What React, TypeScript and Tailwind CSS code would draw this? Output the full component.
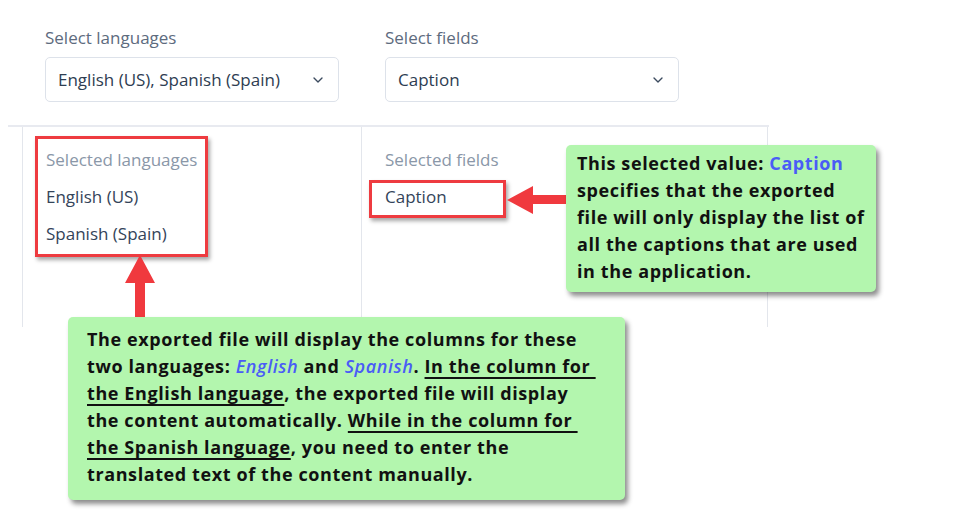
import React from 'react';
import { ChevronDown } from 'lucide-react';

const ui = { fontFamily: '"Open Sans", "Noto Sans", sans-serif' };

function Dropdown({ label, value }: { label: string; value: string }) {
  return (
    <div className="w-[294px]">
      <div className="text-[17px] leading-[20px] text-[#5d6b7e] mb-[9px]">{label}</div>
      <div className="h-[45px] rounded-[5px] border border-[#dde2ea] bg-white flex items-center justify-between pl-[12px] pr-[12px]">
        <span className="text-[17px] text-[#2e3d52]">{value}</span>
        <ChevronDown className="h-4 w-4 text-[#3b4a5e]" strokeWidth={2} />
      </div>
    </div>
  );
}

export default function App() {
  return (
    <div className="relative w-[975px] h-[521px] bg-white overflow-hidden" style={ui}>
      {/* screenshot of the export dialog */}
      <div className="flex gap-[46px] pl-[45px] pt-[28px] h-[125px]">
        <Dropdown label="Select languages" value="English (US), Spanish (Spain)" />
        <Dropdown label="Select fields" value="Caption" />
      </div>
      <div className="ml-[8px] w-[761px] border-t-2 border-[#e8eaf0]">
        <div className="ml-[14px] flex h-[200px]">
          <div className="w-[340px] border-l border-r border-[#e3e6ec] pl-[23px] pt-[22px]">
            <div className="text-[17px] leading-[22px] text-[#8a97a8]">Selected languages</div>
            <div className="mt-[15px] text-[17px] leading-[22px] text-[#34445a]">English (US)</div>
            <div className="mt-[15px] text-[17px] leading-[22px] text-[#34445a]">Spanish (Spain)</div>
          </div>
          <div className="w-[406px] border-r border-[#e3e6ec] pl-[23px] pt-[22px]">
            <div className="text-[17px] leading-[22px] text-[#8a97a8]">Selected fields</div>
            <div className="mt-[15px] text-[17px] leading-[22px] text-[#34445a]">Caption</div>
          </div>
        </div>
      </div>

      {/* annotation: red highlight boxes */}
      <div className="absolute left-[35px] top-[136px] w-[173px] h-[121px] border-[3px] border-[#ee3b40] shadow-[2px_3px_4px_rgba(0,0,0,0.35)]" />
      <div className="absolute left-[369px] top-[180px] w-[137px] h-[38px] border-[3px] border-[#ee3b40] shadow-[2px_3px_4px_rgba(0,0,0,0.35)]" />

      {/* annotation: arrows */}
      <svg className="absolute left-[505px] top-[184px]" width="64" height="34" viewBox="0 0 64 34">
        <polygon points="2,16 28,2 28,11 64,11 64,20 28,20 28,30" fill="#f0393e" />
      </svg>
      <svg className="absolute left-[124px] top-[254px]" width="34" height="66" viewBox="0 0 34 66">
        <polygon points="16,1 31,29 21,29 21,66 11,66 11,29 1,29" fill="#f0393e" />
      </svg>

      {/* annotation: callouts */}
      <div className="absolute left-[566px] top-[145px] w-[310px] h-[147px] rounded-[5px] bg-[#b3f6ae] shadow-[3px_4px_5px_rgba(0,0,0,0.45)] pl-[11px] pt-[5px] text-[18px] leading-[27px] font-bold text-[#111] tracking-[0.6px] whitespace-nowrap">
        <div>
          This selected value: <span className="text-[#4a5cf6]">Caption</span>
        </div>
        <div>specifies that the exported</div>
        <div>file will only display the list of</div>
        <div>all the captions that are used</div>
        <div>in the application.</div>
      </div>

      <div className="absolute left-[68px] top-[317px] w-[557px] h-[183px] rounded-[5px] bg-[#b3f6ae] shadow-[3px_4px_5px_rgba(0,0,0,0.45)] pl-[19px] pt-[9px] text-[18px] leading-[27px] font-bold text-[#111] tracking-[0.6px] whitespace-nowrap">
        <div>The exported file will display the columns for these</div>
        <div>
          two languages: <i className="text-[#4a5cf6] font-semibold">English</i> and{' '}
          <i className="text-[#4a5cf6] font-semibold">Spanish</i>.{' '}
          <span className="underline underline-offset-[4px] decoration-[1.5px]">In the column for&nbsp;</span>
        </div>
        <div>
          <span className="underline underline-offset-[4px] decoration-[1.5px]">the English language</span>, the exported file will display
        </div>
        <div>
          the content automatically.{' '}
          <span className="underline underline-offset-[4px] decoration-[1.5px]">While in the column for&nbsp;</span>
        </div>
        <div>
          <span className="underline underline-offset-[4px] decoration-[1.5px]">the Spanish language</span>, you need to enter the
        </div>
        <div>translated text of the content manually.</div>
      </div>
    </div>
  );
}
